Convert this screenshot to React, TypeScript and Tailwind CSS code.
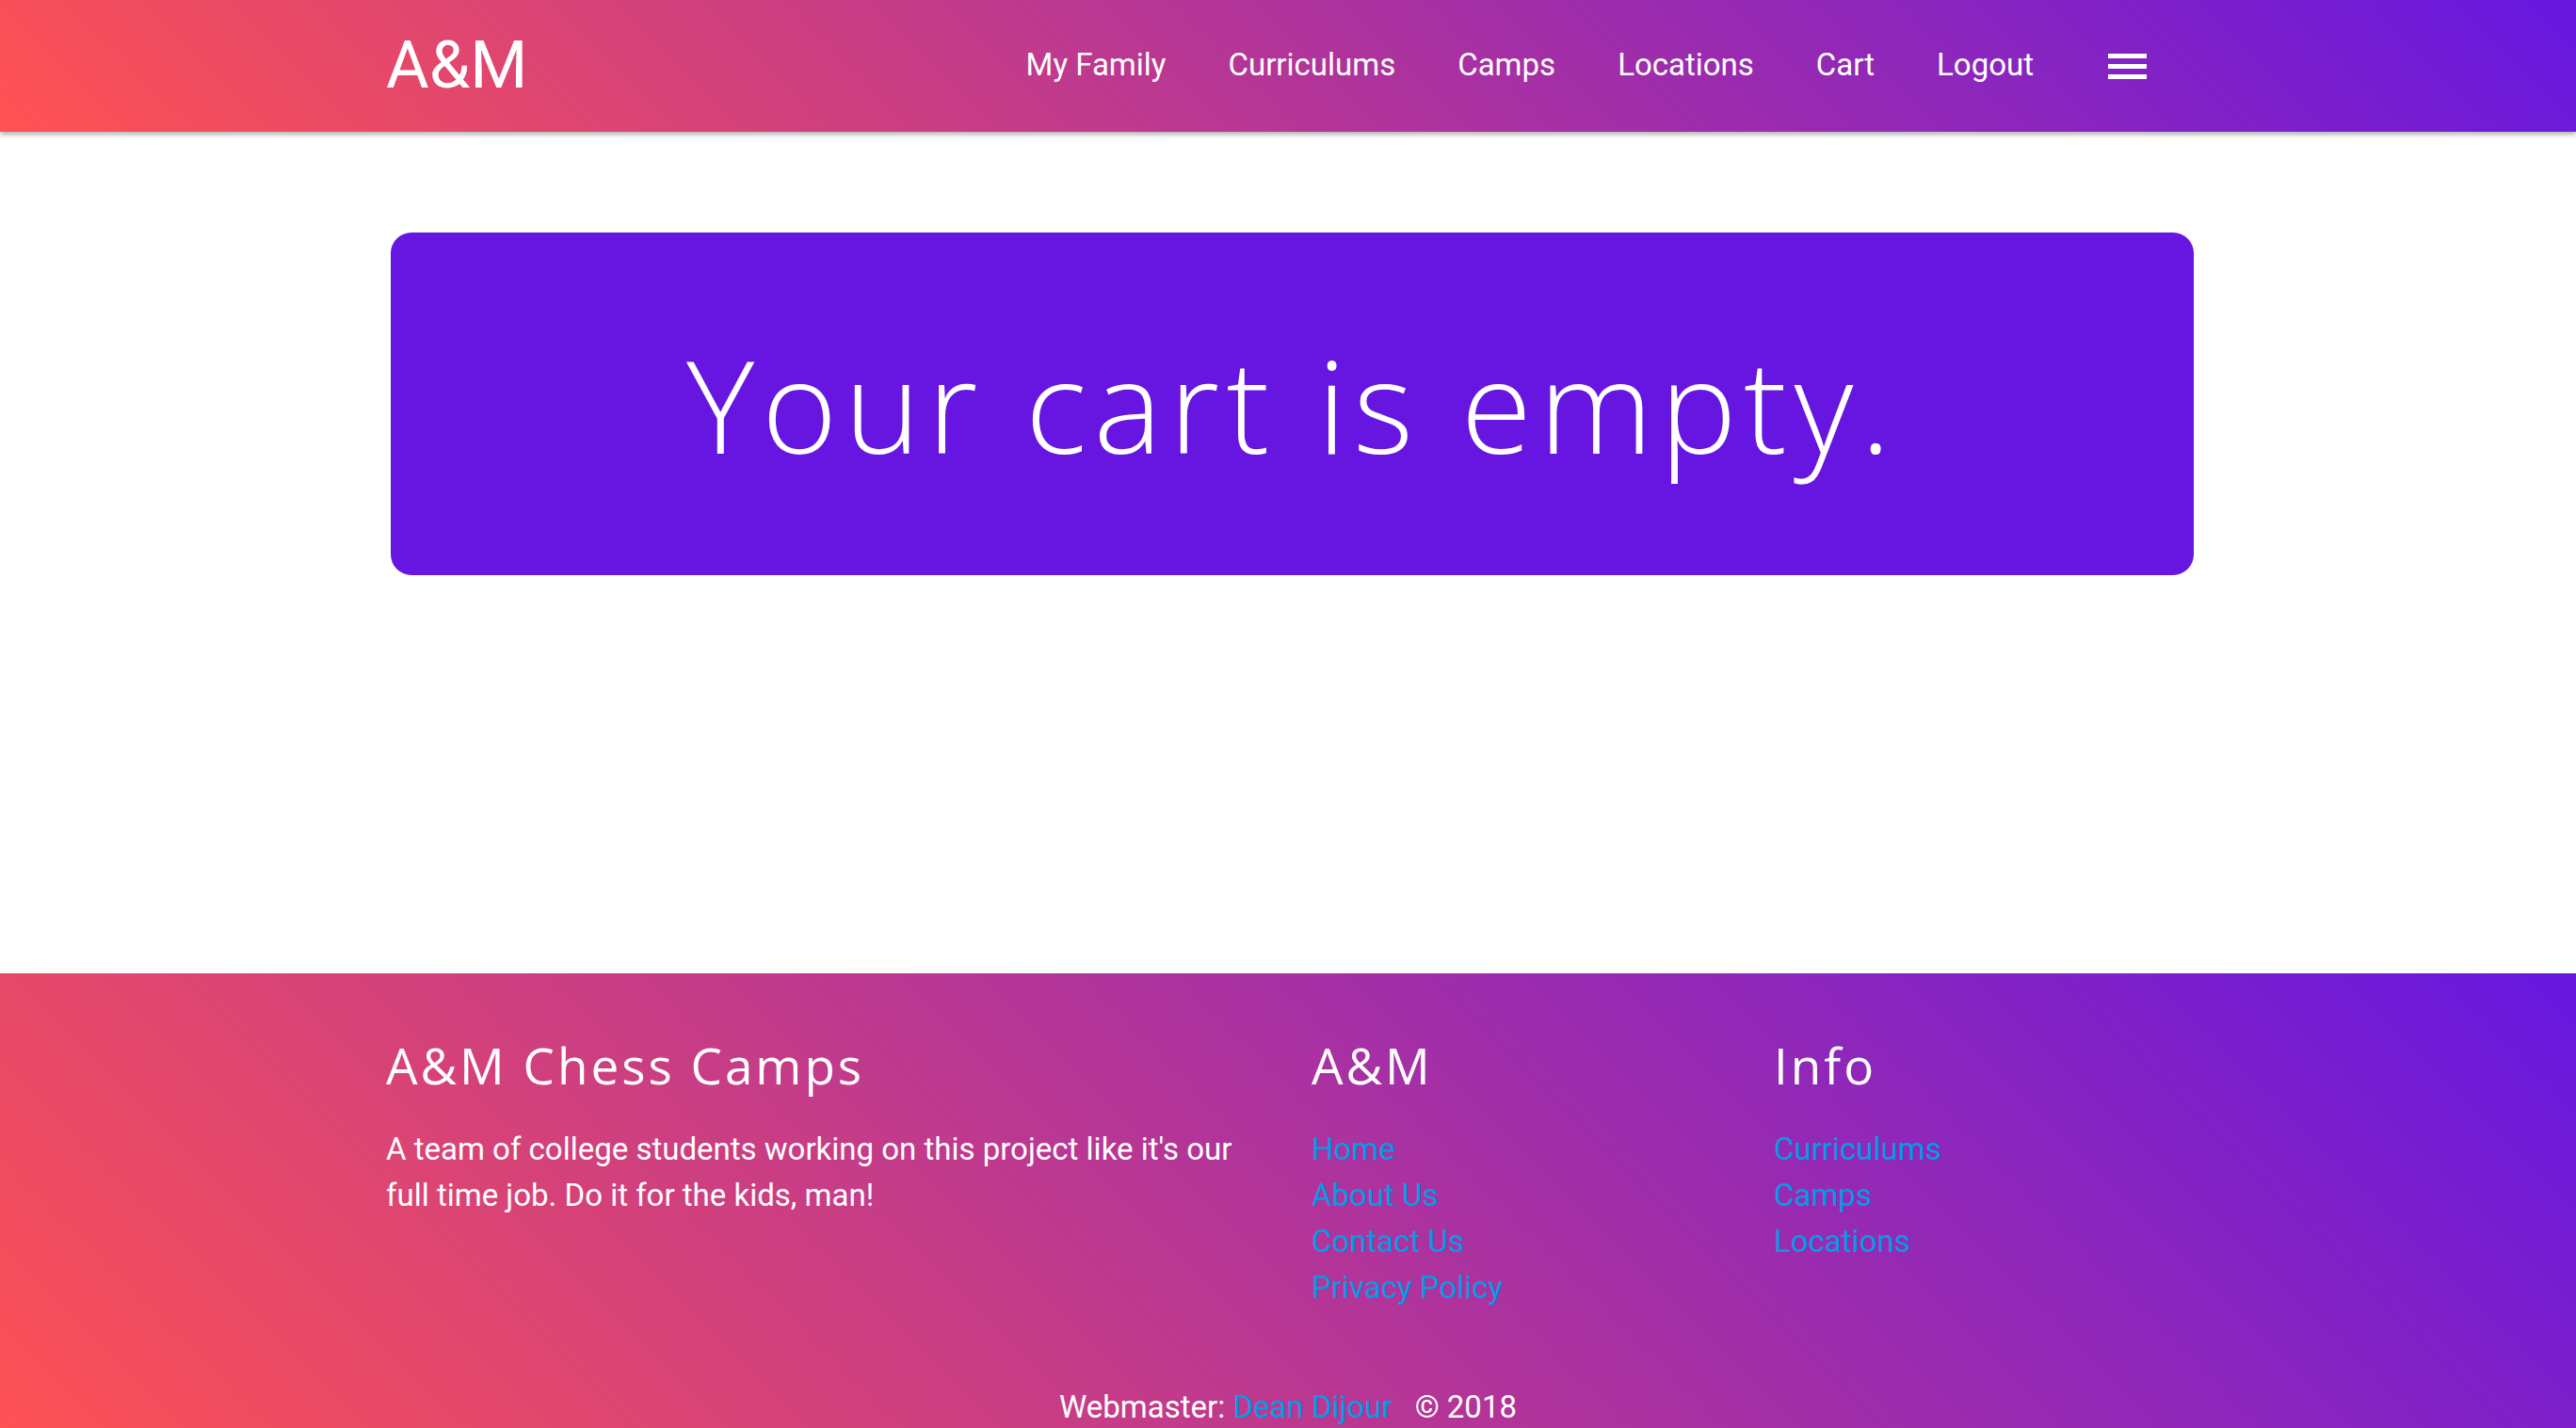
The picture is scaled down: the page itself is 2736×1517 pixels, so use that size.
import React from 'react';

const navLinks = ['My Family', 'Curriculums', 'Camps', 'Locations', 'Cart', 'Logout'];
const companyLinks = ['Home', 'About Us', 'Contact Us', 'Privacy Policy'];
const infoLinks = ['Curriculums', 'Camps', 'Locations'];

const gradient = 'bg-[linear-gradient(45deg,#ff5252,#6617e0)]';

const Navbar: React.FC = () => (
  <nav className={`relative z-10 h-[140px] ${gradient} shadow-[0_3px_5px_rgba(0,0,0,0.3)]`}>
    <div className="mx-auto flex h-full w-[1916px] items-center justify-between pr-[46px]">
      <a className="pb-[2px] text-[70px] leading-none text-white" href="#">A&amp;M</a>
      <div className="flex items-center">
        <ul className="flex items-center gap-[66px] pb-[3px]">
          {navLinks.map(link => (
            <li key={link}>
              <a className="text-[33px] text-white" href="#">{link}</a>
            </li>
          ))}
        </ul>
        {/* hamburger */}
        <button className="ml-[79px] flex w-[41px] flex-col gap-[6px]">
          <span className="block h-[5px] w-full bg-white" />
          <span className="block h-[5px] w-full bg-white" />
          <span className="block h-[5px] w-full bg-white" />
        </button>
      </div>
    </div>
  </nav>
);

const EmptyCart: React.FC = () => (
  <main className="h-[894px] pt-[107px]">
    <div className="ml-[415px] flex h-[364px] w-[1915px] items-center justify-center rounded-[22px] bg-[#6616e0]">
      <h1 className="font-['Open_Sans',sans-serif] text-[137px] font-light leading-none tracking-[7.5px] text-white">
        Your cart is empty.
      </h1>
    </div>
  </main>
);

const Footer: React.FC = () => (
  <footer className={`${gradient} pt-[66px] pb-[40px]`}>
    <div className="mx-auto grid w-[1916px] grid-cols-[983px_493px_1fr]">
      <div>
        <h5 className="font-['Open_Sans',sans-serif] text-[53px] leading-[1.2] tracking-[3px] text-white">A&amp;M Chess Camps</h5>
        <p className="mt-[32px] w-[920px] text-[33px] leading-[49px] text-white">
          A team of college students working on this project like it's our full time job. Do it for the kids, man!
        </p>
      </div>
      <div>
        <h5 className="font-['Open_Sans',sans-serif] text-[53px] leading-[1.2] tracking-[3px] text-white">A&amp;M</h5>
        <ul className="mt-[32px]">
          {companyLinks.map(link => (
            <li key={link} className="text-[33px] leading-[49px]">
              <a className="text-[#039be5]" href="#">{link}</a>
            </li>
          ))}
        </ul>
      </div>
      <div>
        <h5 className="-ml-[2px] font-['Open_Sans',sans-serif] text-[53px] leading-[1.2] tracking-[3px] text-white">Info</h5>
        <ul className="-ml-[2px] mt-[32px]">
          {infoLinks.map(link => (
            <li key={link} className="text-[33px] leading-[49px]">
              <a className="text-[#039be5]" href="#">{link}</a>
            </li>
          ))}
        </ul>
      </div>
    </div>
    <div className="mt-[78px] text-center text-[33px] leading-[49px] text-white">
      Webmaster: <a className="text-[#039be5]" href="#">Dean Dijour</a>
      <span className="ml-[24px]">© 2018</span>
    </div>
  </footer>
);

export default function App() {
  return (
    <div className="min-h-screen bg-white font-['Roboto',sans-serif]">
      <Navbar />
      <EmptyCart />
      <Footer />
    </div>
  );
}
